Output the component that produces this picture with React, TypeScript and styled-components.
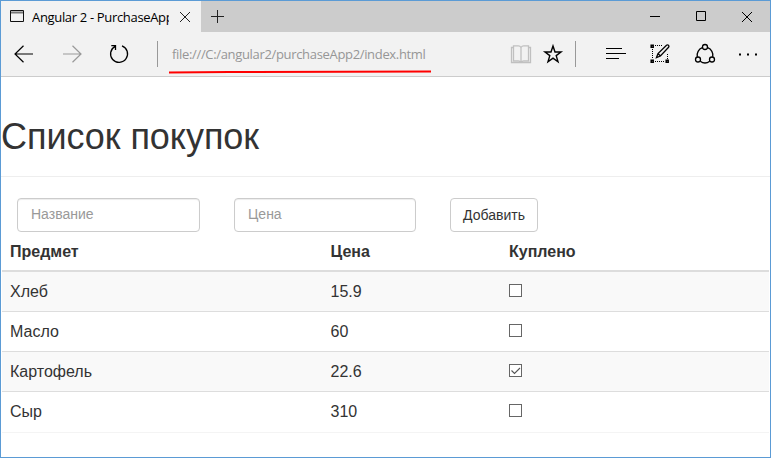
import React, { useState } from "react";
import styled, { createGlobalStyle } from "styled-components";

const GlobalStyle = createGlobalStyle`
  *, *::before, *::after { box-sizing: border-box; }
  html, body { margin: 0; padding: 0; background: #fff; overflow: hidden; }
`;

const Window = styled.div`
  width: 771px;
  height: 458px;
  border: 1px solid #5b9bd5;
  background: #fff;
  display: flex;
  flex-direction: column;
  overflow: hidden;
  font-family: "Liberation Sans", Arial, sans-serif;
  color: #333;
`;

const TitleBar = styled.div`
  height: 31px;
  flex: none;
  display: flex;
  background: #ccc;
`;

const Tab = styled.div`
  width: 200px;
  display: flex;
  align-items: center;
  padding-left: 9px;
  background: #f2f2f2;
`;

const TabTitle = styled.span`
  width: 137px;
  margin-left: 7px;
  overflow: hidden;
  white-space: nowrap;
  font: 13px/20px "Open Sans", sans-serif;
  letter-spacing: -0.33px;
  color: #000;
`;

const Glyph = styled.svg`
  display: block;
  flex: none;
  fill: none;
  overflow: visible;
`;

const IconButton = styled.button<{ $width: number; $color?: string }>`
  width: ${(p) => p.$width}px;
  height: 100%;
  flex: none;
  padding: 0;
  border: 0;
  background: none;
  color: ${(p) => p.$color ?? "#000"};
  display: flex;
  align-items: center;
  justify-content: center;
`;

const WindowControls = styled.div`
  margin-left: auto;
  display: flex;
`;

const Toolbar = styled.div`
  height: 45px;
  flex: none;
  display: flex;
  align-items: center;
  background: #f2f2f2;
  border-bottom: 1px solid #ccc;
`;

const Divider = styled.div<{ $before: number; $after?: number }>`
  width: 1px;
  height: 26px;
  flex: none;
  margin-left: ${(p) => p.$before}px;
  margin-right: ${(p) => p.$after ?? 0}px;
  background: #999;
`;

const Address = styled.div`
  position: relative;
  flex: 1;
  height: 44px;
  padding-left: 14px;
  font: 13px/44px "Open Sans", sans-serif;
  letter-spacing: -0.33px;
  color: #969696;
  white-space: nowrap;
`;

const Underline = styled(Glyph)`
  position: absolute;
  left: 11px;
  top: 36px;
`;

const Page = styled.main`
  flex: 1;
  min-height: 0;
`;

const Heading = styled.h1`
  margin: 0;
  height: 100px;
  padding-top: 40px;
  border-bottom: 1px solid #eee;
  font-size: 36px;
  line-height: 40px;
  font-weight: 400;
  letter-spacing: -0.05px;
`;

const Form = styled.form`
  display: flex;
  gap: 34px;
  padding: 21px 0 0 16px;
`;

const Field = styled.input<{ $width: number }>`
  width: ${(p) => p.$width}px;
  height: 34px;
  padding: 5px 13px 7px;
  border: 1px solid #ccc;
  border-radius: 4px;
  box-shadow: inset 0 1px 1px rgba(0, 0, 0, 0.075);
  font: 14px/20px "Liberation Sans", Arial, sans-serif;
  color: #555;
  &::placeholder { color: #999; opacity: 1; }
`;

const AddButton = styled.button`
  width: 88px;
  height: 34px;
  padding: 0 0 1px;
  border: 1px solid #ccc;
  border-radius: 4px;
  background: #fff;
  font: 14px/20px "Liberation Sans", Arial, sans-serif;
  color: #333;
  white-space: nowrap;
`;

const Table = styled.table`
  width: 767px;
  margin-left: 1px;
  table-layout: fixed;
  border-spacing: 0;
  border-bottom: 1px solid #f4f4f4;
  font-size: 16px;
  line-height: 22px;
`;

const HeadCell = styled.th<{ $width?: number }>`
  width: ${(p) => (p.$width ? `${p.$width}px` : "auto")};
  height: 40px;
  padding: 1px 8px 0;
  border-bottom: 2px solid #ddd;
  text-align: left;
  font-weight: 700;
`;

const Cell = styled.td`
  height: 40px;
  padding: 0 8px;
`;

const Row = styled.tr`
  &:nth-child(odd) { background: #f9f9f9; }
  &:not(:first-child) > td { border-top: 1px solid #ddd; }
  &:first-child > td { height: 39px; }
  &:last-child > td { height: 41px; padding-bottom: 1px; }
`;

const CheckBox = styled.button`
  width: 13px;
  height: 13px;
  margin-top: -2px;
  padding: 0;
  display: block;
  border: 1px solid #666;
  background: #fff;
`;

interface Purchase {
  name: string;
  price: number;
  done: boolean;
}

const initialItems: Purchase[] = [
  { name: "Хлеб", price: 15.9, done: false },
  { name: "Масло", price: 60, done: false },
  { name: "Картофель", price: 22.6, done: true },
  { name: "Сыр", price: 310, done: false },
];

function BrowserTabs() {
  return (
    <TitleBar>
      <Tab>
        <Glyph width="15" height="13" stroke="#111">
          <path d="M.5.5h13v11H.5z" />
          <path d="M1 2.500h12" stroke="#777" strokeWidth="2" />
        </Glyph>
        <TabTitle>Angular 2 - PurchaseApp</TabTitle>
        <IconButton $width={32} aria-label="Закрыть вкладку">
          <Glyph width="10" height="10" stroke="#222"><path d="M0 0l10 10M10 0L0 10" /></Glyph>
        </IconButton>
      </Tab>
      <IconButton $width={33} aria-label="Новая вкладка">
        <Glyph width="13" height="13" stroke="#222"><path d="M0 6.5h13M6.5 0v13" /></Glyph>
      </IconButton>
      <WindowControls>
        <IconButton $width={46} aria-label="Свернуть">
          <Glyph width="10" height="11" stroke="currentColor"><path d="M0 5.5h10" /></Glyph>
        </IconButton>
        <IconButton $width={46} aria-label="Развернуть">
          <Glyph width="10" height="11" stroke="currentColor"><path d="M.5.5h9v9h-9z" /></Glyph>
        </IconButton>
        <IconButton $width={46} aria-label="Закрыть">
          <Glyph width="10" height="10" stroke="currentColor"><path d="M0 0l10 10M10 0L0 10" /></Glyph>
        </IconButton>
      </WindowControls>
    </TitleBar>
  );
}

function BrowserToolbar() {
  return (
    <Toolbar>
      <IconButton $width={46} aria-label="Назад">
        <Glyph width="20" height="18" stroke="currentColor" strokeWidth="1.2"><path d="M19 9H1M9.5.7L1 9l8.500 8.300" /></Glyph>
      </IconButton>
      <IconButton $width={49} $color="#999" aria-label="Вперёд">
        <Glyph width="20" height="18" stroke="currentColor" strokeWidth="1.2"><path d="M1 9h18M10.500.7L19 9l-8.500 8.300" /></Glyph>
      </IconButton>
      <IconButton $width={45} aria-label="Обновить">
        <Glyph width="20" height="20" stroke="currentColor" strokeWidth="1.3">
          <path d="M13 1.900A8.500 8.500 0 1 1 6.200 2.300M2.300 1.700h4.200v4.200" />
        </Glyph>
      </IconButton>
      <Divider $before={16} />
      <Address>
        file:///C:/angular2/purchaseApp2/index.html
        <Underline width="263" height="6"><path d="M0 4.400L60 4 262 3.400" stroke="#f00" strokeWidth="2" /></Underline>
      </Address>
      <IconButton $width={32} $color="#c0c0c0" aria-label="Режим чтения">
        <Glyph width="20" height="19" stroke="currentColor">
          <path d="M10 2.500Q9 .9 7.500.9H2.500v15h5Q9 15.900 10 17.300 11 15.900 12.500 15.900h5V.9h-5Q11 .9 10 2.500zV17.500M2.500 2.500h-2v15h19v-15h-2" strokeWidth="1.300" />
        </Glyph>
      </IconButton>
      <IconButton $width={32} aria-label="Избранное">
        <Glyph width="20" height="20" stroke="currentColor" strokeWidth="1.400">
          <path d="M10 2l2 6H18l-4.800 3.600 1.800 6.200L10 14.100l-5 3.700 1.800-6.200L2 8h6z" />
        </Glyph>
      </IconButton>
      <Divider $before={6} $after={19} />
      <IconButton $width={42} aria-label="Центр">
        <Glyph width="20" height="12" stroke="currentColor" strokeWidth="1.200"><path d="M0 .5h16M0 5.500h20M0 10.500h13" /></Glyph>
      </IconButton>
      <IconButton $width={46} aria-label="Заметка">
        <Glyph width="20" height="20" stroke="currentColor">
          <path d="M5 1.500h7M2.500 5v10M17.500 10v5M5 17.500h10" strokeDasharray="1 1" />
          <path d="M1.200 1.200h2v2h-2zM1.200 16.200h2v2h-2zM16.200 16.200h2v2h-2z" strokeWidth="1.500" />
          <path d="M6.500 13.500L8 9.500 16.500 1.200q1-.8 2 .1.900 1 .1 2L10.400 12zM8 9.500l2.400 2.500" strokeWidth="1.300" />
        </Glyph>
      </IconButton>
      <IconButton $width={43} aria-label="Поделиться">
        <Glyph width="20" height="20" stroke="currentColor" strokeWidth="1.300">
          <circle cx="10" cy="3" r="2.500" /><circle cx="3" cy="15.500" r="2.500" /><circle cx="17" cy="15.500" r="2.500" />
          <path d="M7.300 3.700A8 8 0 0 0 2.300 12.800M12.700 3.700a8 8 0 0 1 5 9.100M5.200 17.200a8 8 0 0 0 9.600 0" />
        </Glyph>
      </IconButton>
      <IconButton $width={44} aria-label="Дополнительно">
        <Glyph width="18" height="3" viewBox="0 0 18 3"><path d="M0 .5h2v2H0zM8 .5h2v2H8zM16 .5h2v2h-2z" fill="#000" /></Glyph>
      </IconButton>
    </Toolbar>
  );
}

export default function App() {
  const [items, setItems] = useState(initialItems);
  const [name, setName] = useState("");
  const [price, setPrice] = useState("");

  const addItem = (event: React.FormEvent) => {
    event.preventDefault();
    if (!name.trim() || !Number.isFinite(Number(price))) return;
    setItems([...items, { name, price: Number(price), done: false }]);
  };

  const toggle = (index: number) =>
    setItems(items.map((item, i) => (i === index ? { ...item, done: !item.done } : item)));

  return (
    <>
      <GlobalStyle />
      <Window>
        <BrowserTabs />
        <BrowserToolbar />
        <Page>
          <Heading>Список покупок</Heading>
          <Form onSubmit={addItem}>
            <Field $width={183} placeholder="Название" value={name} onChange={(e) => setName(e.target.value)} />
            <Field $width={182} placeholder="Цена" value={price} onChange={(e) => setPrice(e.target.value)} />
            <AddButton>Добавить</AddButton>
          </Form>
          <Table>
            <thead>
              <tr>
                <HeadCell $width={320.5}>Предмет</HeadCell>
                <HeadCell $width={178.5}>Цена</HeadCell>
                <HeadCell>Куплено</HeadCell>
              </tr>
            </thead>
            <tbody>
              {items.map((item, i) => (
                <Row key={i}>
                  <Cell>{item.name}</Cell>
                  <Cell>{item.price}</Cell>
                  <Cell>
                    <CheckBox role="checkbox" aria-checked={item.done} aria-label={item.name} onClick={() => toggle(i)}>
                      {item.done && <Glyph width="11" height="11" stroke="#555" strokeWidth="1.100"><path d="M1.500 5.500l3 3 5.500-5.500" /></Glyph>}
                    </CheckBox>
                  </Cell>
                </Row>
              ))}
            </tbody>
          </Table>
        </Page>
      </Window>
    </>
  );
}
